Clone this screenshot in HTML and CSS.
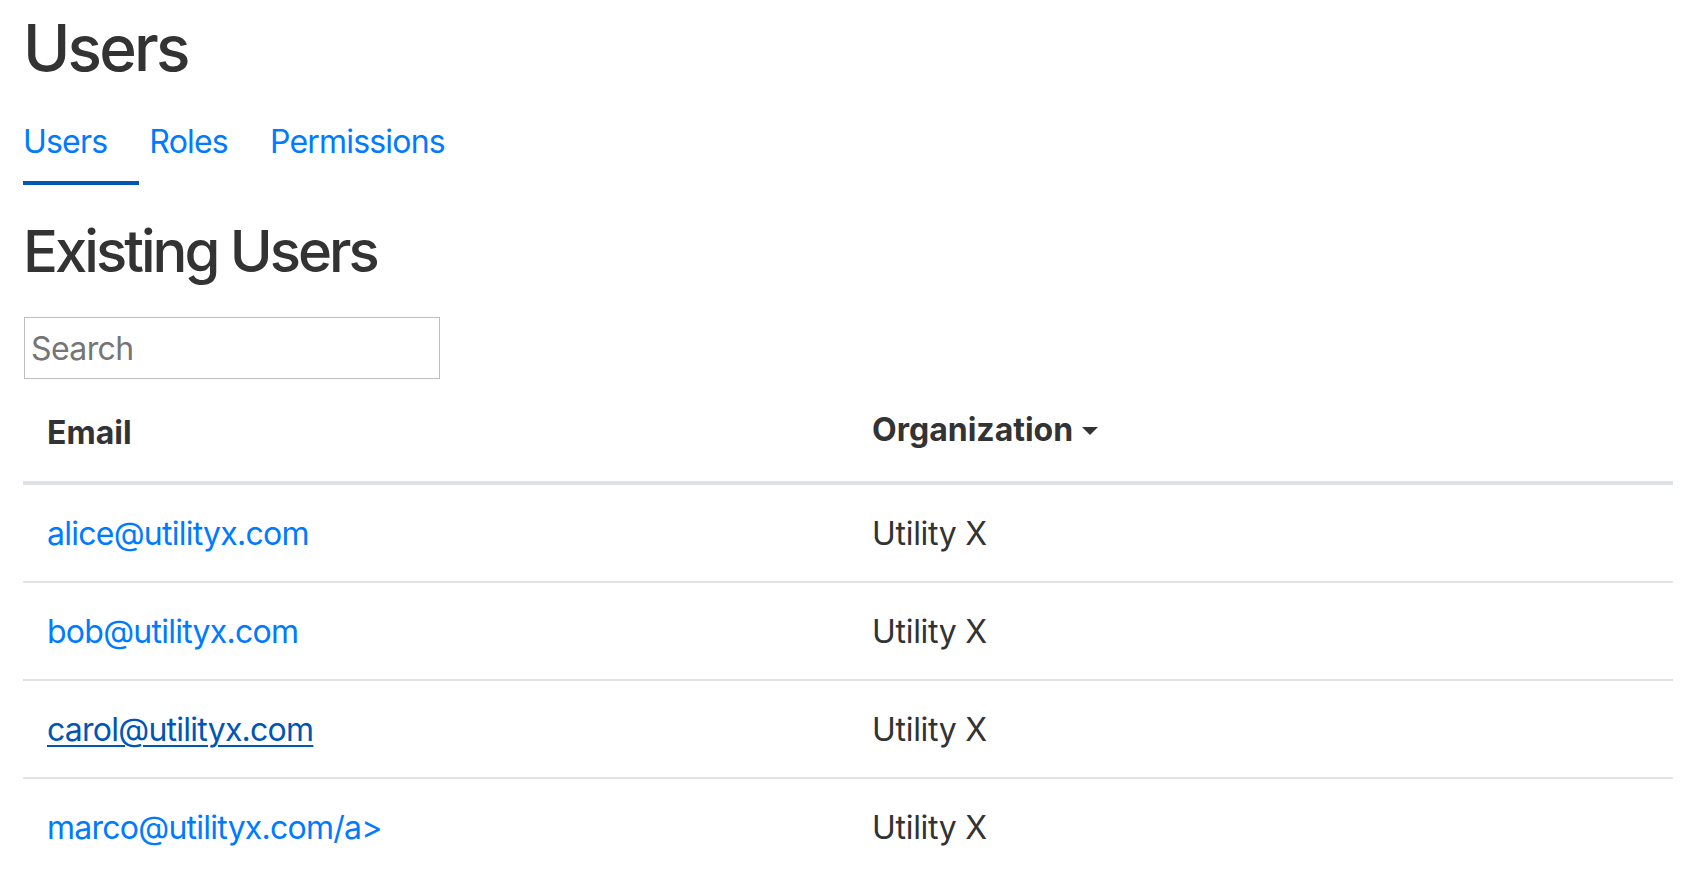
FILE: index.html
```html
<!DOCTYPE html>
<html lang="en">
<head>
<meta charset="utf-8">
<title>Users</title>
<link rel="stylesheet" href="styles.css">
</head>
<body>
<main class="page">
  <h1 class="page-title">Users</h1>
  <nav class="tabs">
    <a class="tab active" href="#">Users</a>
    <a class="tab" href="#">Roles</a>
    <a class="tab" href="#">Permissions</a>
  </nav>
  <h2 class="section-title">Existing Users</h2>
  <input class="search" type="text" placeholder="Search">
  <table class="users">
    <thead>
      <tr>
        <th class="col-email">Email</th>
        <th class="col-org"><span class="org-label">Organization<span class="caret"></span></span></th>
      </tr>
    </thead>
    <tbody>
      <tr><td><a class="link" href="#">alice@utilityx.com</a></td><td class="org">Utility X</td></tr>
      <tr><td><a class="link" href="#">bob@utilityx.com</a></td><td class="org">Utility X</td></tr>
      <tr><td><a class="link hover" href="#">carol@utilityx.com</a></td><td class="org">Utility X</td></tr>
      <tr><td><a class="link" href="#">marco@utilityx.com/a&gt;</a></td><td class="org">Utility X</td></tr>
    </tbody>
  </table>
</main>
</body>
</html>
```

FILE: styles.css
```css
* { box-sizing: border-box; }

body {
  margin: 0;
  background: #fff;
  color: #333;
  font-family: Inter, "Noto Sans", sans-serif;
  font-size: 32px;
  line-height: 48px;
}

.page {
  padding: 0 21px 0 23px;
}

.page-title {
  margin: 9.5px 0 32px;
  font-size: 64px;
  line-height: 76px;
  font-weight: 500;
  letter-spacing: -2.8px;
}

.tabs {
  display: flex;
}

.tab {
  color: #007bff;
  text-decoration: none;
  padding: 0 32px 15.6px 0;
  border-bottom: 4px solid transparent;
  line-height: 48px;
  letter-spacing: -0.8px;
}

.tab + .tab { padding-left: 10px; }

.tab.active {
  border-bottom-color: #0056b3;
}

.section-title {
  margin: 29.5px 0 30.5px;
  font-size: 58px;
  line-height: 72px;
  font-weight: 500;
  letter-spacing: -3px;
}

.search {
  display: block;
  margin: 0 0 0 1px;
  width: 416px;
  height: 62px;
  padding: 0 6px;
  border: 1px solid #bdbdbd;
  border-radius: 0;
  font-family: inherit;
  font-size: 32px;
  letter-spacing: -0.6px;
  color: #333;
  outline: none;
}

.search::placeholder { color: #757575; }

.users {
  width: 100%;
  margin-top: 6px;
  border-collapse: collapse;
}

.users th,
.users td {
  padding: 24px;
  text-align: left;
  vertical-align: top;
}

.users th {
  font-weight: 700;
  border-bottom: 4px solid #dee2e6;
}

.col-email { width: 50%; }

.users tbody tr + tr td {
  border-top: 2px solid #dee2e6;
}

.users tbody td {
  padding-top: 25px;
  padding-bottom: 23px;
}

.org { letter-spacing: -0.3px; }

.org-label {
  position: relative;
  top: -3px;
}

.caret {
  display: inline-block;
  margin-left: 9px;
  vertical-align: 6px;
  border-top: 8px solid #333;
  border-left: 8px solid transparent;
  border-right: 8px solid transparent;
}

.link {
  color: #007bff;
  text-decoration: none;
  letter-spacing: -0.75px;
}

.link.hover {
  color: #0056b3;
  text-decoration: underline;
  text-decoration-thickness: 2px;
  text-underline-offset: 4px;
}
```
